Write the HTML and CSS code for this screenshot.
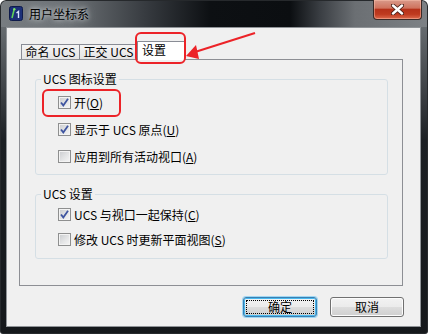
FILE: index.html
```html
<!DOCTYPE html>
<html lang="zh-CN">
<head>
    <meta charset="UTF-8">
    <meta name="viewport" content="width=device-width, initial-scale=1.0">
    <title>用户坐标系</title>
    <link rel="stylesheet" href="styles.css">
</head>
<body>
    <div class="window">
        <div class="titlebar">
            <svg class="app-icon" width="14" height="15" viewBox="0 0 14 15">
                <rect x="0.5" y="0.5" width="13" height="14" rx="2" fill="#1b2f78" stroke="#0d1a4a"/>
                <path d="M3 12 L5 4" stroke="#5fd35a" stroke-width="1.6" fill="none"/>
                <circle cx="5.3" cy="3.2" r="1.2" fill="#7be26a"/>
                <path d="M7.5 7 L9.5 5.5 L9.5 12" stroke="#d8e4ff" stroke-width="1.4" fill="none"/>
            </svg>
            <span class="title">用户坐标系</span>
            <div class="close">
                <svg width="13" height="11" viewBox="0 0 13 11">
                    <path d="M2 1.5 L11 9.5 M11 1.5 L2 9.5" stroke="#4a2018" stroke-width="4.2" stroke-linecap="round"/>
                    <path d="M2 1.5 L11 9.5 M11 1.5 L2 9.5" stroke="#ffffff" stroke-width="2.4" stroke-linecap="round"/>
                </svg>
            </div>
        </div>

        <div class="client">
            <div class="tabs">
                <div class="tab">命名 UCS</div>
                <div class="tab">正交 UCS</div>
                <div class="tab active">设置</div>
            </div>

            <div class="panel">
                <fieldset class="group g1">
                    <legend>UCS 图标设置</legend>
                    <label class="row">
                        <span class="cb"><svg width="11" height="11" viewBox="0 0 11 11"><path d="M2 5.5 L4.3 8.4 L9 1.8" stroke="#3f55a0" stroke-width="1.8" fill="none"/></svg></span>
                        <span class="txt">开(<u>O</u>)</span>
                    </label>
                    <label class="row">
                        <span class="cb"><svg width="11" height="11" viewBox="0 0 11 11"><path d="M2 5.5 L4.3 8.4 L9 1.8" stroke="#3f55a0" stroke-width="1.8" fill="none"/></svg></span>
                        <span class="txt">显示于 UCS 原点(<u>U</u>)</span>
                    </label>
                    <label class="row">
                        <span class="cb"></span>
                        <span class="txt">应用到所有活动视口(<u>A</u>)</span>
                    </label>
                </fieldset>

                <fieldset class="group g2">
                    <legend>UCS 设置</legend>
                    <label class="row">
                        <span class="cb"><svg width="11" height="11" viewBox="0 0 11 11"><path d="M2 5.5 L4.3 8.4 L9 1.8" stroke="#3f55a0" stroke-width="1.8" fill="none"/></svg></span>
                        <span class="txt">UCS 与视口一起保持(<u>C</u>)</span>
                    </label>
                    <label class="row">
                        <span class="cb"></span>
                        <span class="txt">修改 UCS 时更新平面视图(<u>S</u>)</span>
                    </label>
                </fieldset>
            </div>

            <div class="buttons">
                <button class="btn default">确定</button>
                <button class="btn">取消</button>
            </div>
        </div>

        <!-- annotations drawn on top of the screenshot -->
        <div class="mark mark-tab"></div>
        <div class="mark mark-on"></div>
        <svg class="arrow" width="428" height="334" viewBox="0 0 428 334">
            <line x1="255" y1="33" x2="195" y2="52" stroke="#ec2328" stroke-width="2"/>
            <polygon points="186,56 196,45 199,59" fill="#ec2328"/>
        </svg>
    </div>
</body>
</html>
```

FILE: styles.css
```css
body {
    margin: 0;
    font-family: "Noto Sans CJK SC", "Liberation Sans", sans-serif;
    font-size: 12px;
    color: #000;
}

.window {
    position: relative;
    width: 428px;
    height: 334px;
    box-sizing: border-box;
    border-radius: 6px 6px 3px 3px;
    overflow: hidden;
    background:
        linear-gradient(to right, #787d81 0px, #6c7175 70px, #34383d 150px, #0d1013 210px, #0b0e11 290px, #3a3e43 320px, #6b6f73 355px, #7d8185 428px) top / 100% 27px no-repeat,
        linear-gradient(to bottom, #666b6f 27px, #3e4246 90px, #1c2024 140px, #15181b 334px);
    box-shadow: inset 0 0 0 1px #26292c;
}

.titlebar {
    display: flex;
    align-items: center;
    height: 27px;
    padding: 0 6px 0 9px;
    box-sizing: border-box;
}

.app-icon {
    display: block;
}

.title {
    margin-left: 6px;
    line-height: 14px;
    text-shadow: 0 0 4px #d8dcdf, 0 0 8px #b9bec2;
}

.close {
    margin-left: auto;
    align-self: flex-start;
    width: 49px;
    height: 20px;
    box-sizing: border-box;
    display: flex;
    align-items: center;
    justify-content: center;
    border: 1px solid #3b2a27;
    border-top: none;
    border-radius: 0 0 4px 4px;
    background: linear-gradient(#d99a8a 0%, #cf735e 42%, #b6321a 50%, #bf3a1f 75%, #dd6a4c 100%);
    box-shadow: inset 0 0 0 1px rgba(255, 200, 180, 0.45);
}

.client {
    margin: 0 7px 0 6px;
    height: 300px;
    box-sizing: border-box;
    border: 1px solid #8f9397;
    background: #f0f0f0;
}

/* tabs */
.tabs {
    display: flex;
    align-items: flex-end;
    height: 19px;
    margin: 13px 0 0 14px;
}

.tab {
    width: 58px;
    height: 15px;
    margin-bottom: 1px;
    box-sizing: border-box;
    border: 1px solid #898c95;
    border-bottom: none;
    border-right: none;
    background: linear-gradient(#f4f4f4, #e4e4e4);
    line-height: 14px;
    text-align: center;
    white-space: nowrap;
}

.tab.active {
    position: relative;
    z-index: 1;
    width: 48px;
    height: 19px;
    margin-bottom: 0;
    padding: 1px 0 0 4px;
    border-right: 1px solid #898c95;
    background: #fff;
    text-align: left;
}

.panel {
    margin: -1px 0 0 12px;
    width: 382px;
    height: 225px;
    border: 1px solid #8d8f94;
    background: #f0f0f0;
}

/* group boxes */
.group {
    margin: 12px 14px 0 15px;
    padding: 3px 0 4px 0;
    min-inline-size: 0;
    border: 1px solid #d5dfe5;
    border-radius: 3px;
}

.group legend {
    margin-left: 5px;
    padding: 0 2px;
    line-height: 14px;
}

.g2 {
    padding: 1px 0 6px 0;
}

.row {
    display: flex;
    align-items: center;
    height: 27px;
    padding-left: 22px;
}

.g2 .row {
    height: 25px;
}

.txt {
    white-space: nowrap;
    line-height: 14px;
}

.cb {
    display: flex;
    align-items: center;
    justify-content: center;
    width: 13px;
    height: 13px;
    margin-right: 3px;
    box-sizing: border-box;
    border: 1px solid #8e8f8f;
    background: linear-gradient(135deg, #c9cbce 0%, #e4e5e6 55%, #f6f6f6 100%);
    box-shadow: inset 0 0 0 1px #f3f3f3;
}

.cb svg {
    display: block;
}

/* dialog buttons */
.buttons {
    display: flex;
    justify-content: flex-end;
    gap: 13px;
    margin: 11px 16px 0 0;
}

.btn {
    position: relative;
    width: 74px;
    height: 20px;
    padding: 0;
    font: inherit;
    line-height: 18px;
    color: #000;
    border: 1px solid #707070;
    border-radius: 3px;
    background: linear-gradient(#f2f2f2 0%, #ebebeb 50%, #dddddd 51%, #cfcfcf 100%);
    box-shadow: inset 0 0 0 1px #fcfcfc;
}

.btn.default {
    border-color: #3c7fb1;
    box-shadow: inset 0 0 0 1px #48b9ef, 0 0 0 1px #9fd7f3;
}

.btn.default::after {
    content: "";
    position: absolute;
    left: 2px;
    top: 2px;
    right: 2px;
    bottom: 2px;
    border: 1px dotted #000;
}

/* red annotation marks */
.mark {
    position: absolute;
    box-sizing: border-box;
    border: 2px solid #ec2328;
    border-radius: 6px;
    z-index: 2;
}

.mark-tab {
    left: 135px;
    top: 32px;
    width: 51px;
    height: 32px;
}

.mark-on {
    left: 42px;
    top: 89px;
    width: 79px;
    height: 28px;
}

.arrow {
    position: absolute;
    left: 0;
    top: 0;
    z-index: 2;
    pointer-events: none;
}
```
